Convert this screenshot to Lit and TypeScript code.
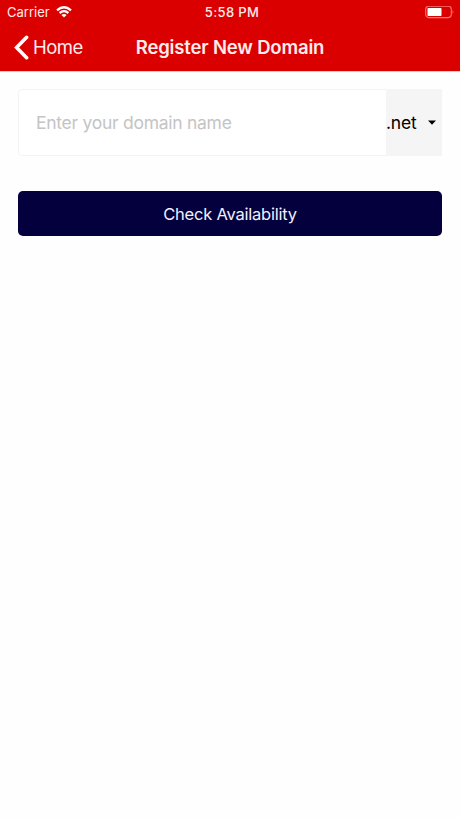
import { LitElement, html, css } from "lit";
import { customElement, state } from "lit/decorators.js";

@customElement("app-root")
export class AppRoot extends LitElement {
  @state() private extension = ".net";

  static styles = css`
    :host {
      display: block;
      min-height: 818px;
      background: #fefefe;
      font-family: Inter, "Liberation Sans", sans-serif;
    }
    * { box-sizing: border-box; }
    svg { display: block; flex: none; }
    button { font: inherit; border: 0; margin: 0; padding: 0; }
    header {
      height: 72px;
      background: #db0000;
      color: #ffecec;
      border-bottom: 1px solid #f6c4c4;
    }
    .status {
      display: grid;
      grid-template-columns: 1fr auto 1fr;
      align-items: center;
      height: 24px;
      padding: 0 5px 0 7px;
      font-size: 13px;
      line-height: 24px;
    }
    .carrier { display: flex; align-items: center; gap: 6px; }
    .time { font-weight: 500; letter-spacing: 0.35px; padding-left: 2px; }
    .battery { justify-self: end; }
    .nav {
      display: grid;
      grid-template-columns: 1fr auto 1fr;
      align-items: center;
      height: 46px;
      padding: 0 14px;
      line-height: 46px;
    }
    .back {
      display: flex;
      align-items: center;
      justify-self: start;
      gap: 4px;
      background: none;
      color: inherit;
      font-size: 18.5px;
      letter-spacing: -0.55px;
    }
    h1 { margin: 0; font-size: 18.5px; font-weight: 600; letter-spacing: -0.16px; }
    main { padding: 17px 18px 0; }
    .field { display: flex; height: 67px; }
    input {
      flex: 1;
      min-width: 0;
      border: 1px solid #f3f3f3;
      border-right: 0;
      border-radius: 5px 0 0 5px;
      background: #fff;
      padding: 0 17px;
      font: inherit;
      font-size: 17.5px;
      letter-spacing: -0.27px;
      outline: 0;
    }
    input::placeholder { color: #c4c4c4; opacity: 1; }
    .picker {
      display: flex;
      align-items: center;
      justify-content: space-between;
      width: 56px;
      padding: 0 6px 0 0;
      background: #f5f5f5;
      color: #000;
      font-size: 17.5px;
      letter-spacing: -0.2px;
    }
    .check {
      display: block;
      width: 100%;
      height: 45px;
      margin-top: 35px;
      border-radius: 5px;
      background: #03003d;
      color: #f2f0ff;
      font-size: 16.5px;
      letter-spacing: -0.23px;
    }
  `;

  render() {
    return html`
      <header>
        <div class="status">
          <div class="carrier">
            <span>Carrier</span>
            <svg width="16" height="12" viewBox="0 0 16 12" fill="none" stroke="#fff" stroke-width="2.3">
              <path d="M1 4.3Q8-1.7 15 4.3" />
              <path d="M3.6 7Q8 3.3 12.4 7" />
              <path d="M8 11.4L5.4 9Q8 7 10.6 9Z" fill="#fff" stroke="none" />
            </svg>
          </div>
          <span class="time">5:58 PM</span>
          <svg class="battery" width="30" height="13" viewBox="0 0 30 13">
            <rect x="0.7" y="0.2" width="25.6" height="11.4" rx="3" fill="none" stroke="#fa7777" stroke-width="1.1" />
            <rect x="2.5" y="2" width="14" height="8" rx="0.8" fill="#fff" />
            <path d="M27.6 4Q29.4 6 27.6 8Z" fill="#fa7777" />
          </svg>
        </div>
        <div class="nav">
          <button class="back">
            <svg width="15" height="25" viewBox="0 0 15 25" fill="none" stroke="#fff" stroke-width="3.6">
              <path d="M12.6 2.3L2.6 12.5L12.6 22.7" stroke-linecap="round" />
            </svg>
            <span>Home</span>
          </button>
          <h1>Register New Domain</h1>
        </div>
      </header>
      <main>
        <div class="field">
          <input type="text" placeholder="Enter your domain name" />
          <button class="picker">
            <span>${this.extension}</span>
            <svg width="8" height="5" viewBox="0 0 8 5"><path d="M0 0.5H8L4 4.8Z" /></svg>
          </button>
        </div>
        <button class="check">Check Availability</button>
      </main>
    `;
  }
}
